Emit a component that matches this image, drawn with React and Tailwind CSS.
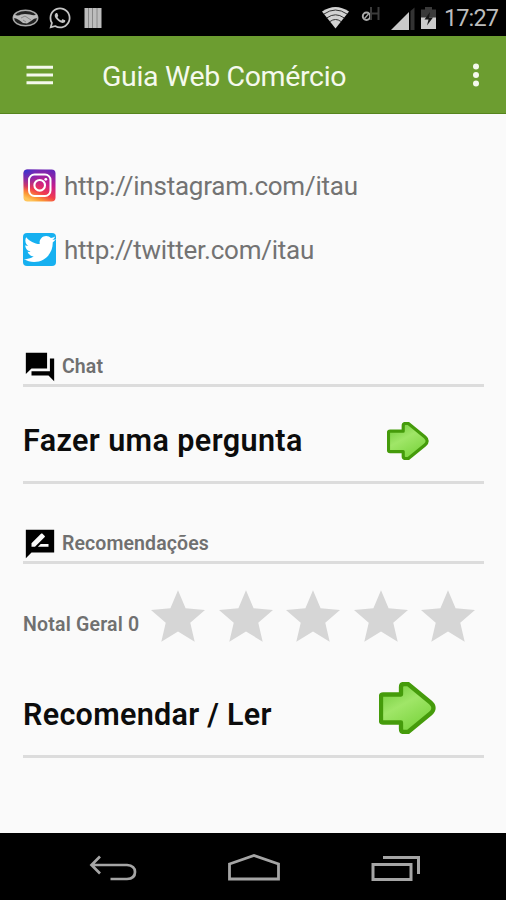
import { FaWhatsapp, FaTwitter } from 'react-icons/fa';

function StatusBar() {
  return (
    <header className="flex h-[36px] items-start bg-black">
      <svg className="mt-[9px] ml-[12px] h-[18px] w-[27px] shrink-0" viewBox="0 0 27 18">
        <ellipse cx="13.5" cy="9" rx="12.2" ry="7.8" fill="#222" stroke="#aaa" strokeWidth="1.5" />
        <path d="M2 5.5 Q6 7.5 9 5.5 L13 5 L18 5.5 Q22 7 25 5.5 L25.5 9 Q22 9 19 12 L15 14.5 L11 14 L7 11 Q4 9 1.5 9Z" fill="#bbb" />
        <path d="M9 9 L13 7 L19 11 M11 11 L14 13" fill="none" stroke="#777" strokeWidth="0.8" />
      </svg>
      <FaWhatsapp className="mt-[6px] ml-[9px] h-[24px] w-[24px] shrink-0 text-[#c4c4c4]" />
      <svg className="mt-[8px] ml-[12px] h-[20px] w-[18px] shrink-0" viewBox="0 0 18 20">
        <path d="M0.5 0H17.5V20H0.5Z" fill="#bdbdbd" />
        <path d="M4.5 0V20M8.5 0V20M13 0V20" stroke="#888" strokeWidth="1" />
      </svg>
      <div className="flex-1" />
      <svg className="h-[36px] w-[134px] shrink-0" viewBox="-10.5 0 134 36">
        <path d="M1.5 11.5 Q15 2.5 28.5 11.5 L15 28.5Z" fill="#d2d2d2" />
        <path d="M3.5 14 Q15 6 26.5 14 M6.5 17.8 Q15 11.8 23.5 17.8 M9.5 21.5 Q15 17.5 20.5 21.5" fill="none" stroke="#333" strokeWidth="1" />
        <circle cx="46" cy="16.3" r="3.7" fill="none" stroke="#aaa" strokeWidth="2" />
        <path d="M44 18.5 L48 14" stroke="#aaa" strokeWidth="1.3" />
        <path d="M50.5 7V20M58 7V20M50.5 13.5H58" fill="none" stroke="#3b3b3b" strokeWidth="2" />
        <path d="M70.5 30 L88.5 12 V30Z" fill="#c9c9c9" />
        <path d="M90 11 L94 7.5 V30 H90Z" fill="#333" />
        <path d="M100.5 9.5H104.5V7H111.5V9.5H115.5V18H100.5Z" fill="#3a3a3a" />
        <path d="M100.5 17.5H115.5V29H100.5Z" fill="#cbcbcb" />
        <path d="M109.5 12 L104 19.5 H108 L106.5 25.5 L112.5 17.5 H108.5Z" fill="#161616" />
      </svg>
      <span className="mt-[3px] mr-[7px] w-[55px] text-[23.5px] leading-[31px] tracking-[-0.9px] whitespace-nowrap text-[#bcbcbc]">17:27</span>
    </header>
  );
}

function AppBar() {
  return (
    <div className="flex h-[78px] items-center border-b border-[#56851d] bg-[#6c9d30] text-[#f5f9ed]">
      <svg className="mt-[2px] ml-[26px] h-[21px] w-[28px]" viewBox="0 0 28 21">
        <path d="M0.5 2.3H27M0.5 10H27M0.5 17.7H27" stroke="currentColor" strokeWidth="3" />
      </svg>
      <h1 className="mt-[4px] ml-[48px] flex-1 text-[28.5px] leading-[36px] tracking-[-0.35px] whitespace-nowrap">Guia Web Comércio</h1>
      <svg className="mt-[1px] mr-[25px] h-[24px] w-[10px]" viewBox="0 0 10 24" fill="currentColor">
        <circle cx="5" cy="3.4" r="3" />
        <circle cx="5" cy="12" r="3" />
        <circle cx="5" cy="20.6" r="3" />
      </svg>
    </div>
  );
}

function InstagramIcon() {
  return (
    <svg className="h-[33px] w-[33px] shrink-0" viewBox="0 0 33 33">
      <defs>
        <linearGradient id="insta" x1="0.75" y1="0" x2="0.3" y2="1">
          <stop offset="0" stopColor="#6a28b8" />
          <stop offset="0.38" stopColor="#c91c8c" />
          <stop offset="0.68" stopColor="#f23c4c" />
          <stop offset="0.88" stopColor="#fc9b35" />
          <stop offset="1" stopColor="#ffc55a" />
        </linearGradient>
        <radialGradient id="instaBlue" cx="0.05" cy="0" r="0.65">
          <stop offset="0" stopColor="#3038d0" />
          <stop offset="1" stopColor="#5a2bc8" stopOpacity="0" />
        </radialGradient>
      </defs>
      <rect x="0.5" y="0.5" width="32" height="32" rx="4" fill="url(#insta)" />
      <rect x="0.5" y="0.5" width="32" height="32" rx="4" fill="url(#instaBlue)" />
      <rect x="6" y="5.5" width="21.5" height="21.5" rx="5.5" fill="none" stroke="#fff" strokeWidth="2" />
      <circle cx="16.7" cy="16.3" r="5.3" fill="none" stroke="#fff" strokeWidth="2.1" />
      <circle cx="22.8" cy="10.3" r="1.4" fill="#fff" />
    </svg>
  );
}

function LinkRow({ icon, children }) {
  return (
    <div className="flex h-[64px] items-center gap-[8px]">
      {icon}
      <span className="mt-[2px] text-[26px] leading-[32px] tracking-[-0.23px] whitespace-nowrap text-[#737373]">{children}</span>
    </div>
  );
}

function SectionTitle({ path, children }) {
  return (
    <div className="flex h-[45px] items-center gap-[5px] border-b-3 border-[#dcdcdc]">
      <svg className="mt-[7px] h-[34px] w-[34px] shrink-0" viewBox="0 0 24 24">
        <path d={path} fill="#000" />
      </svg>
      <h2 className="mt-[7px] text-[19.5px] leading-[24px] font-semibold tracking-[0.1px] whitespace-nowrap text-[#707070]">{children}</h2>
    </div>
  );
}

function GreenArrow({ className, id }) {
  return (
    <svg className={className} viewBox="0 0 57 52" preserveAspectRatio="none">
      <defs>
        <linearGradient id={id} x1="0.1" y1="0" x2="0.7" y2="1">
          <stop offset="0" stopColor="#6fca39" />
          <stop offset="0.45" stopColor="#a0e668" />
          <stop offset="1" stopColor="#78d33b" />
        </linearGradient>
      </defs>
      <path d="M4 12.5H22V5Q22 2 25 2H29L51.5 20.5Q54.5 23 54.5 26Q54.5 29 51.5 31.5L29 50H25Q22 50 22 47V40.5H4Q2 40.5 2 38.5V14.5Q2 12.5 4 12.5Z" fill={`url(#${id})`} stroke="#459b0b" strokeWidth="4.3" strokeLinejoin="round" />
    </svg>
  );
}

function Stars() {
  return (
    <div className="flex gap-[13.5px]">
      {[1, 2, 3, 4, 5].map((n) => (
        <svg key={n} className="h-[52px] w-[54px] shrink-0" viewBox="2 2 20 19" fill="#d6d6d6">
          <path d="M12 17.27L18.18 21l-1.64-7.03L22 9.24l-7.19-.61L12 2 9.19 8.63 2 9.24l5.46 4.73L5.82 21z" />
        </svg>
      ))}
    </div>
  );
}

function NavBar() {
  return (
    <nav className="flex h-[67px] items-center justify-between bg-black pt-[3px] pr-[85px] pl-[89px]">
      <svg className="h-[30px] w-[48px]" viewBox="0 0 48 30" fill="none" stroke="#a5a5a5" strokeWidth="2.7">
        <path d="M11 3.5L2.5 12L11 20.5M2.5 12H38Q46 12.5 46 19Q46 25.7 38 26H21.5" />
      </svg>
      <svg className="h-[30px] w-[54px]" viewBox="0 0 54 30" fill="none" stroke="#a5a5a5" strokeWidth="2.8">
        <path d="M2.5 11L27 2.5L51.5 11V26H2.5Z" />
      </svg>
      <svg className="h-[30px] w-[50px]" viewBox="0 0 50 30" fill="none" stroke="#a5a5a5" strokeWidth="3">
        <path d="M2 11.5H40V26.5H2ZM12 4.5H47.5V21" />
      </svg>
    </nav>
  );
}

export default function App() {
  return (
    <div className="flex h-[900px] w-[506px] flex-col overflow-hidden bg-[#fafafa] font-[Roboto,sans-serif]">
      <StatusBar />
      <AppBar />
      <main className="flex h-[719px] flex-col pr-[22px] pl-[23px]">
        <div className="pt-[39px]">
          <LinkRow icon={<InstagramIcon />}>http://instagram.com/itau</LinkRow>
          <LinkRow
            icon={
              <span className="flex h-[33px] w-[33px] shrink-0 items-center justify-center rounded-[4px] bg-[#16b0f0]">
                <FaTwitter className="h-[32px] w-[32px] text-white" />
              </span>
            }
          >
            http://twitter.com/itau
          </LinkRow>
        </div>
        <section className="mt-[61px]">
          <SectionTitle path="M22 6h-3v9H6v3h12l4 4zM17 13V2H2v15l4-4z">
            Chat
          </SectionTitle>
          <div className="flex h-[97px] items-center justify-between border-b-3 border-[#dcdcdc] pr-[55.5px]">
            <span className="mt-[14px] text-[30.5px] leading-[36px] font-semibold tracking-[0.4px] whitespace-nowrap text-[#0c0c0c]">Fazer uma pergunta</span>
            <GreenArrow id="arrowSmall" className="mt-[14px] h-[38px] w-[42px]" />
          </div>
        </section>
        <section className="mt-[35px]">
          <SectionTitle path="M22 2H2v20l4-4h16zM6 14v-2.47l6.88-6.88c.2-.2.51-.2.71 0l1.77 1.77c.2.2.2.51 0 .71L8.47 14H6zm12 0h-7.5l2-2H18v2z">
            Recomendações
          </SectionTitle>
          <div className="mt-[26px] flex h-[52px] items-center justify-between pr-[9px]">
            <span className="mt-[18px] text-[19.5px] leading-[24px] font-semibold tracking-[0.2px] whitespace-nowrap text-[#707070]">Notal Geral 0</span>
            <Stars />
          </div>
          <div className="flex h-[116px] items-center justify-between border-b-3 border-[#dcdcdc] pr-[48.5px]">
            <span className="mt-[32px] text-[30.5px] leading-[36px] font-semibold tracking-[0.3px] whitespace-nowrap text-[#0c0c0c]">Recomendar / Ler</span>
            <GreenArrow id="arrowLarge" className="mt-[19px] h-[52px] w-[57px]" />
          </div>
        </section>
      </main>
      <NavBar />
    </div>
  );
}
